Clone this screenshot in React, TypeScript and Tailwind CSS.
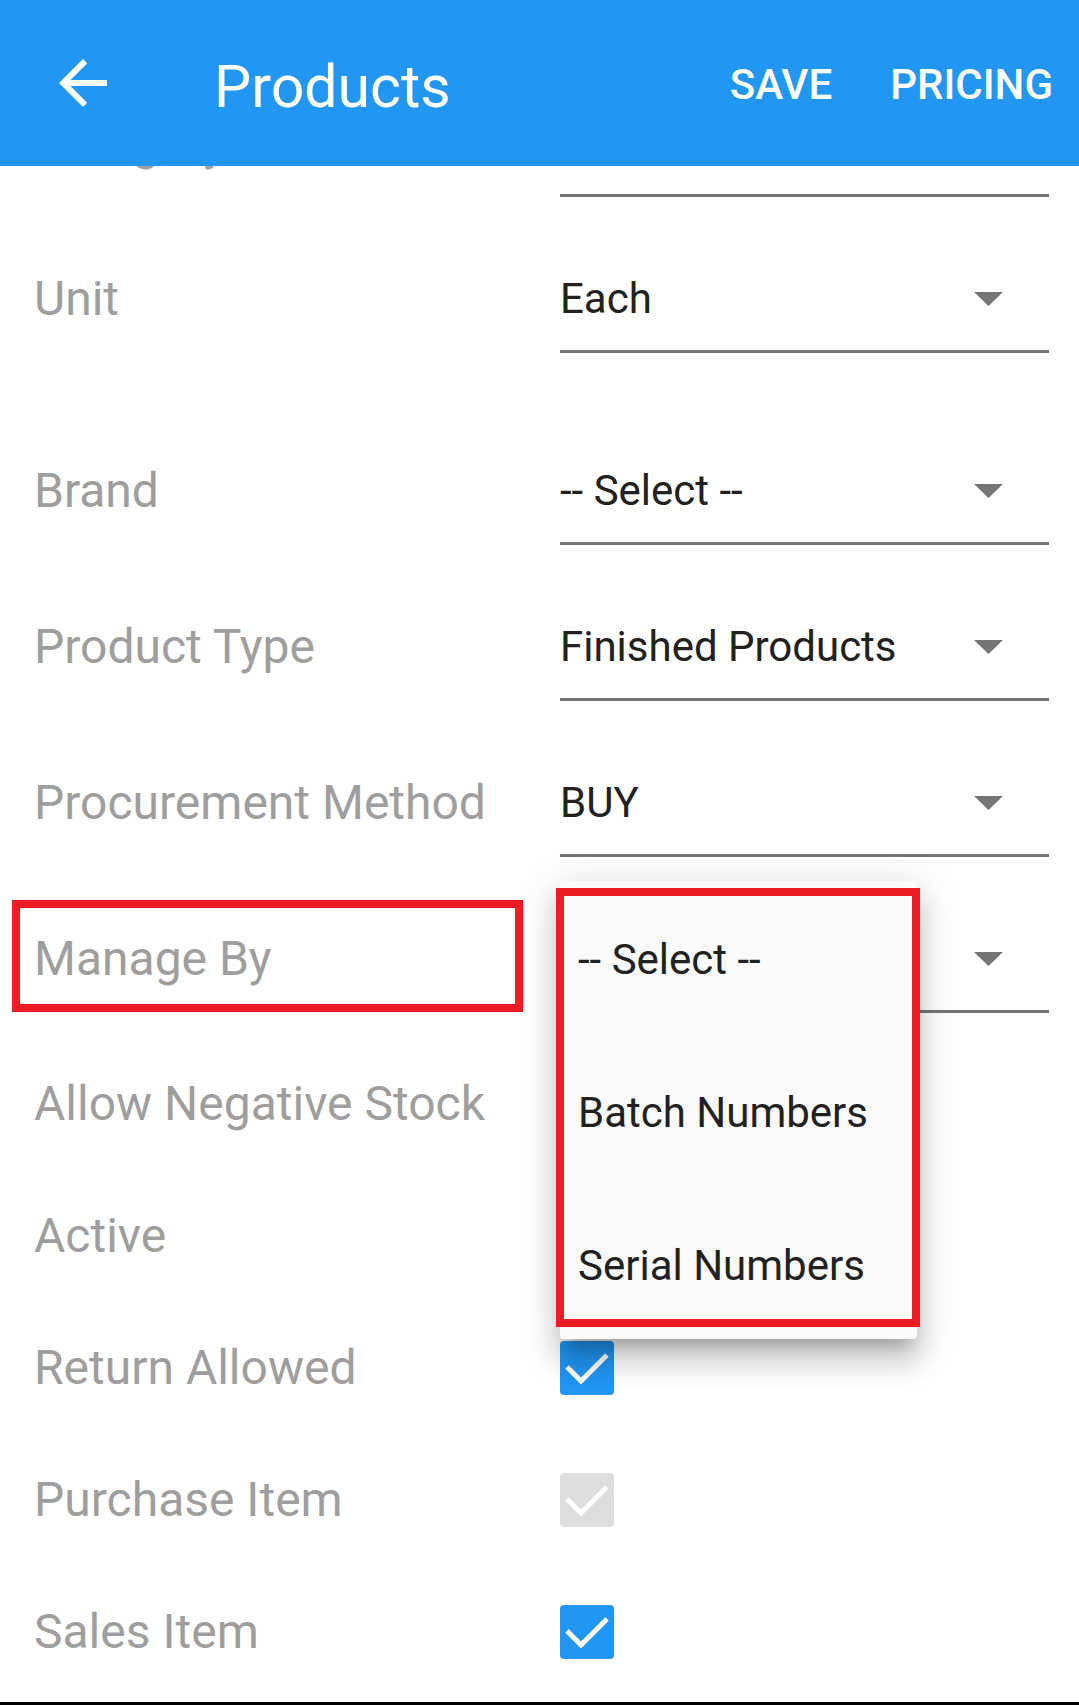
import React from "react";

type SelectField = {
  label: string;
  value: string;
  rowClass: string;
};

type CheckField = {
  label: string;
  state: "on" | "off" | "disabled";
};

// Category and Manage By values sit under the app bar / open menu, so they stay empty
const SELECT_FIELDS: SelectField[] = [
  { label: "Category", value: "", rowClass: "h-[156px]" },
  { label: "Unit", value: "Each", rowClass: "h-[156px]" },
  { label: "Brand", value: "-- Select --", rowClass: "h-[192px]" },
  { label: "Product Type", value: "Finished Products", rowClass: "h-[156px]" },
  { label: "Procurement Method", value: "BUY", rowClass: "h-[156px]" },
  { label: "Manage By", value: "", rowClass: "h-[156px]" },
];

const CHECK_FIELDS: CheckField[] = [
  { label: "Allow Negative Stock", state: "on" },
  { label: "Active", state: "on" },
  { label: "Return Allowed", state: "on" },
  { label: "Purchase Item", state: "disabled" },
  { label: "Sales Item", state: "on" },
];

const MENU_OPTIONS = ["-- Select --", "Batch Numbers", "Serial Numbers"];

const LABEL = "text-[48px] leading-none text-[#9E9E9E] whitespace-nowrap";

function Caret() {
  return (
    <svg width="29" height="14" viewBox="0 0 29 14" className="mr-[46px] shrink-0">
      <polygon points="0,0 29,0 14.5,14" fill="#757575" />
    </svg>
  );
}

function Checkbox({ state }: { state: CheckField["state"] }) {
  const bg = state === "disabled" ? "bg-[#DDDDDD]" : "bg-[#2196F3]";
  return (
    <div className={`flex h-[54px] w-[54px] items-center justify-center rounded-[4px] ${bg}`}>
      <svg width="54" height="54" viewBox="0 0 54 54">
        <polyline points="7,26 21,40 47,14" fill="none" stroke="#ffffff" strokeWidth="5" />
      </svg>
    </div>
  );
}

function SelectRow({ label, value, rowClass }: SelectField) {
  return (
    <div className={`flex items-end ${rowClass}`}>
      <div className="flex h-[105px] w-[560px] shrink-0 items-center pb-[3px] pl-[34px]">
        <span className={LABEL}>{label}</span>
      </div>
      <div className="mr-[30px] flex h-[105px] flex-1 items-center border-b-[3px] border-[#757575]">
        <span className="flex-1 whitespace-nowrap text-[42px] leading-none text-[#212121]">{value}</span>
        <Caret />
      </div>
    </div>
  );
}

export default function App() {
  return (
    <div className="relative flex h-[1705px] w-[1079px] flex-col overflow-hidden bg-white font-['Roboto',sans-serif]">
      <header className="relative z-10 flex h-[166px] shrink-0 items-center bg-[#2196F3] pr-[26px] text-white">
        <svg width="72" height="72" viewBox="0 0 24 24" className="ml-[47px] shrink-0" fill="#ffffff">
          <path d="M20 11H7.83l5.59-5.59L12 4l-8 8 8 8 1.41-1.41L7.83 13H20v-2z" />
        </svg>
        <h1 className="ml-[95px] pt-[6px] text-[59px] font-normal leading-none">Products</h1>
        <div className="ml-auto flex items-center gap-[58px] pt-[4px] text-[42px] font-medium leading-none">
          <span>SAVE</span>
          <span>PRICING</span>
        </div>
      </header>

      <main className="-mt-[125px] flex flex-col">
        {SELECT_FIELDS.map((field) => (
          <SelectRow key={field.label} {...field} />
        ))}

        <div className="flex flex-col pt-[25px]">
          {CHECK_FIELDS.map(({ label, state }) => (
            <div key={label} className="flex h-[132px] items-center">
              <div className="w-[560px] shrink-0 pl-[34px]">
                <span className={LABEL}>{label}</span>
              </div>
              <Checkbox state={state} />
            </div>
          ))}
        </div>
      </main>

      <div className="mt-auto h-[3px] w-full bg-black" />

      {/* open dropdown for Manage By */}
      <div className="absolute left-[560px] top-[881px] z-20 h-[458px] w-[357px] overflow-hidden rounded-[4px] bg-[#FAFAFA] pt-[2px] shadow-[0_14px_14px_-8px_rgba(0,0,0,0.2),0_22px_28px_3px_rgba(0,0,0,0.14),0_8px_38px_6px_rgba(0,0,0,0.12)]">
        {MENU_OPTIONS.map((option) => (
          <div key={option} className="flex h-[153px] items-center pl-[18px]">
            <span className="whitespace-nowrap text-[42px] leading-none text-[#212121]">{option}</span>
          </div>
        ))}
      </div>

      {/* red annotation boxes */}
      <div className="pointer-events-none absolute left-[12px] top-[900px] z-30 h-[112px] w-[511px] border-[8px] border-[#ED1C24]" />
      <div className="pointer-events-none absolute left-[556px] top-[888px] z-30 h-[439px] w-[364px] border-[8px] border-[#ED1C24]" />
    </div>
  );
}
